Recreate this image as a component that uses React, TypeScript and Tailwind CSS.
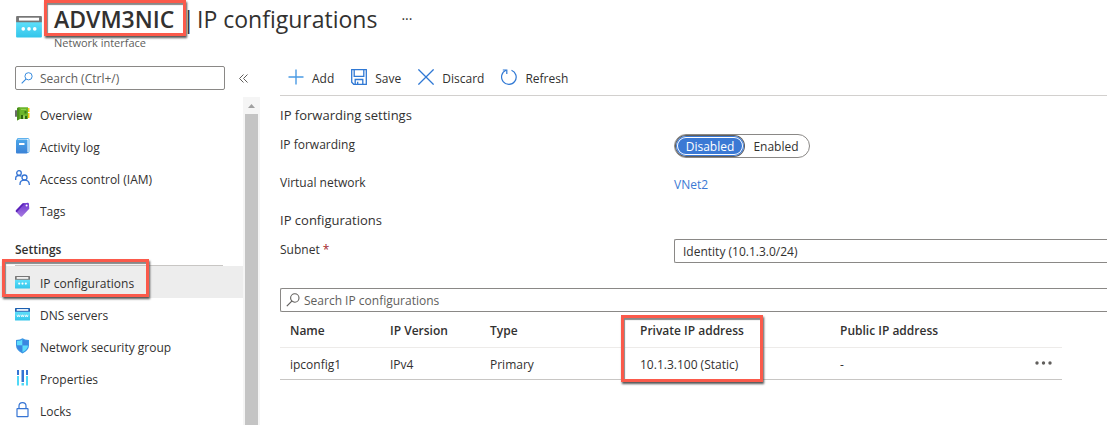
import React, { useState } from "react";

type IconProps = { className?: string };

function CardIcon({ bar = "#767676", glyph = "dots", className = "" }: IconProps & { bar?: string; glyph?: "dots" | "www" }) {
  return (
    <svg viewBox="0 0 27 23" className={className} aria-hidden="true">
      <defs>
        <linearGradient id="card-body" x1="0" y1="1" x2="0" y2="0">
          <stop offset="0" stopColor="#32c5ea" />
          <stop offset="1" stopColor="#5fe0fb" />
        </linearGradient>
      </defs>
      <path d="M0 6h27v15.500q0 1-1 1H1q-1 0-1-1z" fill="url(#card-body)" />
      <path d="M1 0h25q1 0 1 1v5.500H0V1q0-1 1-1z" fill={bar} />
      <rect x="3" y="1.800" width="21" height="3" fill="#fff" />
      {glyph === "dots" ? (
        <g fill="#fff">
          <circle cx="7.500" cy="13.500" r="1.900" />
          <circle cx="13.500" cy="13.500" r="1.900" />
          <circle cx="19.500" cy="13.500" r="1.900" />
        </g>
      ) : (
        <path
          d="M3.500 12l1.300 4 1.500-4 1.500 4L9 12M10.800 12l1.300 4 1.500-4 1.500 4 1.300-4M18 12l1.300 4 1.500-4 1.500 4 1.300-4"
          fill="none"
          stroke="#fff"
          strokeWidth="1.300"
        />
      )}
    </svg>
  );
}

function SearchIcon({ className = "" }: IconProps) {
  return (
    <svg viewBox="0 0 14 14" className={className} fill="none" stroke="currentColor" aria-hidden="true">
      <circle cx="8.800" cy="5" r="4.200" strokeWidth="1.100" />
      <path d="M5.800 8.200L.8 13.200" strokeWidth="1.200" />
    </svg>
  );
}

function OverviewIcon() {
  return (
    <svg viewBox="0 0 16 16" className="size-4" aria-hidden="true">
      <rect x="0" y="4" width="2" height="7" rx="1" fill="#6b6b6b" />
      <rect x="12" y="2" width="2.500" height="4" fill="#f2c811" />
      <rect x="12" y="7" width="2.500" height="5" fill="#f2c811" />
      <path d="M2 2l2-.8h9V13H5l-3 1.500z" fill="#6bb52b" />
      <path d="M2 2l2.500-.8V13L2 14.500z" fill="#4b8f1c" />
      <path d="M6 3h5v1H6z" fill="#8fd14f" />
      <path d="M9.500 5h2v2.500h-2z" fill="#3b7a16" />
      <path d="M6 9h2v4H6zM10 10h2v3h-2z" fill="#2f6612" />
      <path d="M8.500 9.500h1v3.500h-1z" fill="#c9ef9b" />
    </svg>
  );
}

function ActivityIcon() {
  return (
    <svg viewBox="0 0 16 16" className="size-4" aria-hidden="true">
      <defs>
        <linearGradient id="book" x1="0" y1="0" x2="0" y2="1">
          <stop offset="0" stopColor="#4ba6ea" />
          <stop offset="1" stopColor="#3b82d6" />
        </linearGradient>
      </defs>
      <path d="M2.500.5H13q1 0 1 1v12q0 1-1 1H2.500z" fill="#fff" stroke="#5fb2ee" />
      <path d="M2 1.500h9.500q1 0 1 1v12q0 1-1 1H2q-1 0-1-1v-12q0-1 1-1z" fill="url(#book)" />
      <rect x="4" y="5" width="5.500" height="2" rx=".5" fill="#fff" />
    </svg>
  );
}

function PeopleIcon() {
  return (
    <svg viewBox="0 0 16 16" className="size-4" fill="none" stroke="#3574d4" strokeWidth="1.300" aria-hidden="true">
      <circle cx="4" cy="3" r="2.300" />
      <path d="M.7 10V8.500q0-3 3.300-3 1.300 0 2.300.7" />
      <circle cx="9.500" cy="7.500" r="2.500" />
      <path d="M5 15v-.8q0-4 4.500-4t4.800 4v.8" />
    </svg>
  );
}

function TagIcon() {
  return (
    <svg viewBox="0 0 16 16" className="size-4" aria-hidden="true">
      <defs>
        <linearGradient id="tag" x1="0" y1="0" x2="0" y2="1">
          <stop offset="0" stopColor="#6d36cf" />
          <stop offset="1" stopColor="#a67ae0" />
        </linearGradient>
      </defs>
      <path d="M7.500 1.500L12.800.7q1 0 1.100 1l.4 5.100-7.300 7.700q-.7.600-1.400 0L1 9.700q-.6-.7 0-1.400z" fill="url(#tag)" />
      <path d="M7.500 1.500L10 1 2.500 9.500l-1 .8L1 9.700q-.6-.7 0-1.400z" fill="#5a22b8" />
      <circle cx="11.600" cy="3.600" r="1" fill="#fff" />
    </svg>
  );
}

function ShieldIcon() {
  return (
    <svg viewBox="0 0 16 16" className="size-4" aria-hidden="true">
      <path d="M7.500.3Q9.500 2 14 2v5.500q0 4.500-6.500 8Q1 12 1 7.500V2Q5.500 2 7.500.3z" fill="#3b95e4" />
      <path d="M2 3q3.500 0 5.500-1.500v6H2z" fill="#5ddcfb" />
      <path d="M7.500 1.500Q9.500 3 13 3v4.500H7.500z" fill="#3b86e0" />
      <path d="M7.500 7.500H2q.2 3.800 5.500 6.800z" fill="#3b86e0" />
      <path d="M7.500 7.500H13q-.2 3.800-5.500 6.800z" fill="#5ddcfb" />
    </svg>
  );
}

function PropertiesIcon() {
  return (
    <svg viewBox="0 0 16 16" className="size-4" aria-hidden="true">
      <rect x="2" y="0" width="2" height="5" fill="#3574d4" />
      <rect x="2" y="6" width="2" height="9.500" fill="#50d9f7" />
      <rect x="6.500" y="0" width="2.500" height="12" fill="#3574d4" />
      <rect x="6.500" y="13" width="2.500" height="2.500" fill="#50d9f7" />
      <rect x="11" y="0" width="2" height="5" fill="#3574d4" />
      <rect x="11" y="6" width="2" height="9.500" fill="#50d9f7" />
    </svg>
  );
}

function LockIcon() {
  return (
    <svg viewBox="0 0 16 16" className="size-4" fill="none" stroke="#3574d4" strokeWidth="1.200" aria-hidden="true">
      <rect x="2" y="6.600" width="11" height="8" rx=".4" />
      <path d="M4 6.500V4q0-3.300 3.500-3.300T11 4v2.500" />
    </svg>
  );
}

function AddIcon() {
  return (
    <svg viewBox="0 0 16 16" className="size-4" fill="none" stroke="#4a9be4" strokeWidth="1.400" aria-hidden="true">
      <path d="M8 .5v15M.5 8h15" />
    </svg>
  );
}

function SaveIcon() {
  return (
    <svg viewBox="0 0 16 16" className="size-4" fill="none" stroke="#2f78d4" strokeWidth="1.300" aria-hidden="true">
      <path d="M.7.7h14.600v14.600H2.700l-2-2z" />
      <path d="M3.200.7v6.600h9.600V.7" />
      <path d="M4.200 15.300v-4.800h7.600v4.800M6.700 15v-2.300" />
    </svg>
  );
}

function DiscardIcon() {
  return (
    <svg viewBox="0 0 16 16" className="size-4" fill="none" stroke="#2f78d4" strokeWidth="1.300" aria-hidden="true">
      <path d="M.4.400l15.200 15.200M15.600.400L.4 15.600" />
    </svg>
  );
}

function RefreshIcon() {
  return (
    <svg viewBox="0 0 16 16" className="size-4" fill="none" stroke="#2f78d4" strokeWidth="1.200" aria-hidden="true">
      <path d="M10.500 1.200A7.300 7.300 0 1 1 5 1.300" />
      <path d="M1.800 1H5.800V5" />
    </svg>
  );
}

function Highlight({ className }: { className: string }) {
  return (
    <span
      aria-hidden="true"
      className={
        "pointer-events-none absolute z-10 border-[3px] border-[#fb5a4b] shadow-[1px_2px_2px_#555,inset_1px_2px_1px_#888] " +
        className
      }
    />
  );
}

const generalItems = [
  { label: "Overview", icon: <OverviewIcon /> },
  { label: "Activity log", icon: <ActivityIcon /> },
  { label: "Access control (IAM)", icon: <PeopleIcon /> },
  { label: "Tags", icon: <TagIcon /> },
];

const settingsItems = [
  { label: "IP configurations", icon: <CardIcon className="h-[13px] w-[15px]" />, active: true },
  { label: "DNS servers", icon: <CardIcon bar="#1b5fb0" glyph="www" className="h-[13px] w-[15px]" /> },
  { label: "Network security group", icon: <ShieldIcon /> },
  { label: "Properties", icon: <PropertiesIcon /> },
  { label: "Locks", icon: <LockIcon /> },
];

function NavItem({ label, icon, active }: { label: string; icon: React.ReactNode; active?: boolean }) {
  return (
    <li className={active ? "relative bg-[#ededed]" : ""}>
      <a href="#" aria-current={active ? "page" : undefined} className="flex h-8 items-center gap-[9px] pl-[15px]">
        <span className="flex size-4 items-center">{icon}</span>
        <span className="pt-[3px]">{label}</span>
      </a>
      {active && <Highlight className="-top-[7px] left-[2px] h-[38px] w-[147px]" />}
    </li>
  );
}

const commands = [
  { label: "Add", icon: <AddIcon /> },
  { label: "Save", icon: <SaveIcon /> },
  { label: "Discard", icon: <DiscardIcon /> },
  { label: "Refresh", icon: <RefreshIcon /> },
];

export default function App() {
  const [forwarding, setForwarding] = useState("Disabled");

  return (
    <div className="flex h-screen flex-col overflow-hidden bg-white font-['Open_Sans','Noto_Sans',sans-serif] text-[12px] leading-4 text-[#323130]">
      <header className="flex h-[58px] shrink-0 items-start pl-4">
        <CardIcon className="mt-4 h-[22px] w-[26px] shrink-0" />
        <div className="relative ml-3 pt-1">
          <h1 className="text-[23px] leading-[30px] whitespace-nowrap">
            <span className="font-semibold">ADVM3NIC</span>
            <span className="-mr-1 ml-2">|</span> IP configurations
          </h1>
          <p className="text-[11px] leading-[18px] text-[#605e5c]">Network interface</p>
          <Highlight className="top-0 -left-[10px] h-9 w-[142px]" />
        </div>
        <button type="button" aria-label="More actions" className="mt-[9px] ml-6 text-[14px] leading-5">
          ···
        </button>
      </header>

      <div className="flex min-h-0 flex-1">
        <aside className="flex w-[260px] shrink-0 flex-col">
          <div className="flex h-[39px] shrink-0 items-start gap-[14px] pt-2 pl-[15px]">
            <label className="flex h-6 w-[210px] items-center gap-[7px] rounded-[2px] border border-[#8a8886] pl-[5px]">
              <SearchIcon className="size-3 text-[#2f86dc]" />
              <input
                type="text"
                aria-label="Search menu"
                placeholder="Search (Ctrl+/)"
                className="min-w-0 flex-1 pt-[2px] outline-none placeholder:text-[#605e5c]"
              />
            </label>
            <button type="button" aria-label="Collapse menu" className="flex h-6 items-center">
              <svg viewBox="0 0 9 9" className="size-[9px]" fill="none" stroke="#605e5c" aria-hidden="true">
                <path d="M4.500.5l-4 4 4 4M8.500.5l-4 4 4 4" />
              </svg>
            </button>
          </div>
          <div className="flex min-h-0 flex-1">
            <nav className="w-[243px] pt-px">
              <ul>
                {generalItems.map((item) => (
                  <NavItem key={item.label} {...item} />
                ))}
              </ul>
              <h2 className="mr-5 ml-[15px] flex h-10 items-end border-b border-[#c8c6c4] pb-[7px] font-semibold">Settings</h2>
              <ul>
                {settingsItems.map((item) => (
                  <NavItem key={item.label} {...item} />
                ))}
              </ul>
            </nav>
            <div aria-hidden="true" className="flex w-[17px] flex-col items-center bg-[#f5f5f5]">
              <svg viewBox="0 0 7 4" className="mt-[7px] mb-[6px] h-1 w-[7px]">
                <path d="M0 4L3.500 0 7 4z" fill="#a0a0a0" />
              </svg>
              <div className="w-[13px] flex-1 bg-[#c4c4c4]" />
            </div>
          </div>
        </aside>

        <main className="min-w-0 flex-1 pl-5">
          <div className="flex h-[38px] items-center gap-[17px] border-b border-[#d2d0ce] pt-px pl-2">
            {commands.map(({ label, icon }) => (
              <button key={label} type="button" className="flex items-center gap-2">
                {icon}
                <span className="pt-[3px]">{label}</span>
              </button>
            ))}
          </div>

          <section className="pt-[10px]">
            <h2 className="h-[18px] text-[13px] leading-[18px]">IP forwarding settings</h2>
            <div role="radiogroup" aria-labelledby="forwarding-label" className="mt-[10px] flex h-6">
              <span id="forwarding-label" className="w-[394px] shrink-0 pt-[3px]">
                IP forwarding
              </span>
              <div className="relative flex h-6 w-[136px] items-center rounded-full border border-[#8a8886] px-px">
                {["Disabled", "Enabled"].map((option) => (
                  <label
                    key={option}
                    className={
                      forwarding === option
                        ? "flex h-5 w-[68px] items-center justify-center rounded-full bg-[#3b79d4] pt-px text-white shadow-[inset_0_0_0_1px_#3b79d4,inset_0_0_0_2px_#fff] ring-1 ring-[#605e5c]"
                        : "flex h-5 flex-1 items-center justify-center rounded-full pt-px"
                    }
                  >
                    <input
                      type="radio"
                      name="forwarding"
                      className="sr-only"
                      checked={forwarding === option}
                      onChange={() => setForwarding(option)}
                    />
                    {option}
                  </label>
                ))}
              </div>
            </div>
            <div className="mt-[17px] flex h-4">
              <span className="w-[394px] shrink-0">Virtual network</span>
              <a href="#" className="pt-[2px] text-[#3b79d4]">
                VNet2
              </a>
            </div>
          </section>

          <section className="pt-5">
            <h2 className="h-[18px] text-[13px] leading-[18px]">IP configurations</h2>
            <div className="mt-[10px] flex h-6">
              <label htmlFor="subnet" className="w-[394px] shrink-0 pt-[3px]">
                Subnet <span className="text-[#a4262c]">*</span>
              </label>
              <select
                id="subnet"
                className="h-6 min-w-0 flex-1 appearance-none rounded-l-[2px] border border-r-0 border-[#8a8886] bg-white pt-px pl-2"
              >
                <option>Identity (10.1.3.0/24)</option>
              </select>
            </div>

            <label className="mt-[25px] flex h-6 items-center gap-1 rounded-l-[2px] border border-r-0 border-[#8a8886] pl-[5px]">
              <SearchIcon className="size-[14px] text-[#605e5c]" />
              <input
                type="text"
                aria-label="Search IP configurations"
                placeholder="Search IP configurations"
                className="min-w-0 flex-1 pt-[2px] outline-none placeholder:text-[#605e5c]"
              />
            </label>

            <table className="w-full max-w-[782px] table-fixed border-collapse text-left">
              <thead>
                <tr className="h-[35px] border-b border-[#edebe9]">
                  <th className="w-[100px] pt-[3px] pl-[10px] font-semibold">Name</th>
                  <th className="w-[100px] pt-[3px] pl-[10px] font-semibold">IP Version</th>
                  <th className="w-[150px] pt-[3px] pl-[10px] font-semibold">Type</th>
                  <th className="relative w-[200px] pt-[3px] pl-[10px] font-semibold">
                    Private IP address
                    <Highlight className="top-[3px] -left-[9px] h-[67px] w-[142px]" />
                  </th>
                  <th className="pt-[3px] pl-[10px] font-semibold">Public IP address</th>
                  <th className="w-9" aria-label="Actions" />
                </tr>
              </thead>
              <tbody>
                <tr className="h-8 border-b border-[#c8c6c4]">
                  <td className="pt-[3px] pl-[10px]">ipconfig1</td>
                  <td className="pt-[3px] pl-[10px]">IPv4</td>
                  <td className="pt-[3px] pl-[10px]">Primary</td>
                  <td className="pt-[3px] pl-[10px]">10.1.3.100 (Static)</td>
                  <td className="pt-[3px] pl-[10px]">-</td>
                  <td>
                    <button type="button" aria-label="Row actions" className="flex h-4 items-center pl-[9px]">
                      <svg viewBox="0 0 17 4" className="h-1 w-[17px]" fill="#605e5c" aria-hidden="true">
                        <circle cx="2" cy="2" r="1.700" />
                        <circle cx="8.500" cy="2" r="1.700" />
                        <circle cx="15" cy="2" r="1.700" />
                      </svg>
                    </button>
                  </td>
                </tr>
              </tbody>
            </table>
          </section>
        </main>
      </div>
    </div>
  );
}
